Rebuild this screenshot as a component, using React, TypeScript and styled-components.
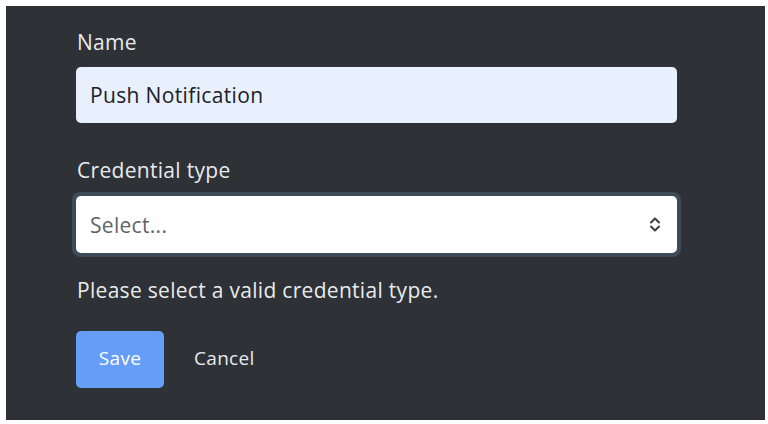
import styled, { createGlobalStyle } from "styled-components";

const GlobalStyle = createGlobalStyle`
  html, body {
    margin: 0;
    padding: 0;
    background: #ffffff;
  }
  body {
    font-family: "Open Sans", "Liberation Sans", sans-serif;
  }
`;

const ChevronUpDown = () => (
  <svg width="12" height="17" viewBox="0 0 12 17" fill="none">
    <path d="M2 6.5 L6 2.5 L10 6.5" stroke="#3c4043" strokeWidth="2" strokeLinecap="round" strokeLinejoin="round" />
    <path d="M2 10.5 L6 14.5 L10 10.5" stroke="#3c4043" strokeWidth="2" strokeLinecap="round" strokeLinejoin="round" />
  </svg>
);

const App = () => {
  return (
    <>
      <GlobalStyle />
      <Panel>
        <Form>
          <Label>Name</Label>
          <TextInput defaultValue="Push Notification" />
          <Label $gapTop={35}>Credential type</Label>
          <SelectRing>
            <SelectBox>
              <Placeholder>Select...</Placeholder>
              <ChevronUpDown />
            </SelectBox>
          </SelectRing>
          <HelpText>Please select a valid credential type.</HelpText>
          <Actions>
            <SaveButton>Save</SaveButton>
            <CancelButton>Cancel</CancelButton>
          </Actions>
        </Form>
      </Panel>
    </>
  );
};

const Panel = styled.div`
  margin: 6px 3px 4px 6px;
  height: 414px;
  box-sizing: border-box;
  background-color: #2e3136;
  padding: 24px 0 0 70px;
`;

const Form = styled.div`
  width: 601px;
  display: flex;
  flex-direction: column;
`;

const Label = styled.div<{ $gapTop?: number }>`
  margin-top: ${(props) => props.$gapTop ?? 0}px;
  margin-bottom: 13px;
  font-size: 21px;
  letter-spacing: 0.3px;
  line-height: 24px;
  color: #e8eaed;
  padding-left: 1px;
`;

const TextInput = styled.input`
  height: 56px;
  box-sizing: border-box;
  border: none;
  outline: none;
  border-radius: 5px;
  background-color: #e8f0fe;
  padding: 0 14px;
  font-family: "Open Sans", "Liberation Sans", sans-serif;
  font-size: 21px;
  letter-spacing: 0.35px;
  color: #202124;
`;

const SelectRing = styled.div`
  margin: -3px -4px 0 -4px;
  padding: 4px;
  border-radius: 8px;
  background-color: #3d4b57;
`;

const SelectBox = styled.div`
  height: 57px;
  box-sizing: border-box;
  border-radius: 5px;
  background-color: #ffffff;
  display: flex;
  align-items: center;
  justify-content: space-between;
  padding: 0 16px 0 14px;
`;

const Placeholder = styled.span`
  font-size: 21px;
  letter-spacing: 0.3px;
  color: #5f6368;
`;

const HelpText = styled.div`
  margin-top: 21px;
  font-size: 21px;
  letter-spacing: 0.3px;
  line-height: 24px;
  color: #e8eaed;
  padding-left: 1px;
`;

const Actions = styled.div`
  margin-top: 29px;
  display: flex;
  align-items: center;
  gap: 30px;
`;

const SaveButton = styled.button`
  width: 88px;
  height: 57px;
  border: none;
  border-radius: 5px;
  background-color: #669df6;
  color: #ffffff;
  padding: 0 0 3px;
  font-family: "Open Sans", "Liberation Sans", sans-serif;
  font-size: 19px;
  letter-spacing: 0.3px;
  cursor: pointer;
`;

const CancelButton = styled.button`
  border: none;
  background: none;
  padding: 0 0 3px;
  color: #e8eaed;
  font-family: "Open Sans", "Liberation Sans", sans-serif;
  font-size: 19px;
  letter-spacing: 0.3px;
  cursor: pointer;
`;

export default App;
